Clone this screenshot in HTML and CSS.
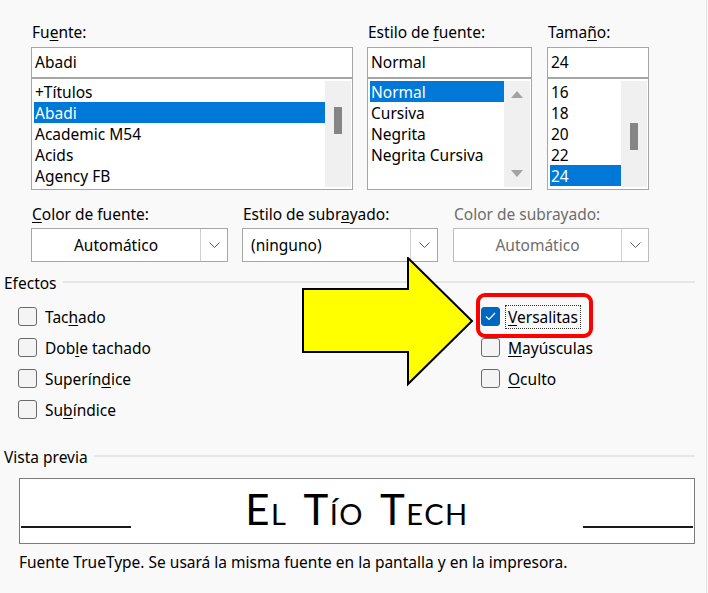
FILE: index.html
```html
<!DOCTYPE html>
<html lang="es">
<head>
    <meta charset="UTF-8">
    <meta name="viewport" content="width=device-width, initial-scale=1.0">
    <title>Fuente</title>
    <link rel="stylesheet" href="styles.css">
</head>
<body>
    <div class="dialog">
        <div class="font-row">
            <div class="field field-name">
                <div class="lbl">Fu<u>e</u>nte:</div>
                <div class="combo-input">Abadi</div>
                <div class="listbox">
                    <ul class="items">
                        <li>+Títulos</li>
                        <li class="sel">Abadi</li>
                        <li>Academic M54</li>
                        <li>Acids</li>
                        <li>Agency FB</li>
                    </ul>
                    <div class="scroll"><div class="thumb thumb-name"></div></div>
                </div>
            </div>

            <div class="field field-style">
                <div class="lbl">Estilo de <u>f</u>uente:</div>
                <div class="combo-input">Normal</div>
                <div class="listbox">
                    <ul class="items">
                        <li class="sel">Normal</li>
                        <li>Cursiva</li>
                        <li>Negrita</li>
                        <li>Negrita Cursiva</li>
                    </ul>
                    <div class="scroll scroll-arrows">
                        <svg width="12" height="8" viewBox="0 0 12 8"><path d="M0 8 L6 1 L12 8 Z" fill="#a3a3a3"/></svg>
                        <svg width="12" height="8" viewBox="0 0 12 8"><path d="M0 0 L6 7 L12 0 Z" fill="#a3a3a3"/></svg>
                    </div>
                </div>
            </div>

            <div class="field field-size">
                <div class="lbl">Tama<u>ñ</u>o:</div>
                <div class="combo-input">24</div>
                <div class="listbox">
                    <ul class="items">
                        <li>16</li>
                        <li>18</li>
                        <li>20</li>
                        <li>22</li>
                        <li class="sel">24</li>
                    </ul>
                    <div class="scroll"><div class="thumb thumb-size"></div></div>
                </div>
            </div>
        </div>

        <div class="select-row">
            <div class="field field-color">
                <div class="lbl"><u>C</u>olor de fuente:</div>
                <div class="select">
                    <span class="select-text center">Automático</span>
                    <span class="select-btn"><svg width="11" height="7" viewBox="0 0 11 7"><path d="M0.5 0.5 L5.5 5.5 L10.5 0.5" fill="none" stroke="#5a5a5a" stroke-width="1"/></svg></span>
                </div>
            </div>
            <div class="field field-underline">
                <div class="lbl">Estilo de subr<u>a</u>yado:</div>
                <div class="select">
                    <span class="select-text">(ninguno)</span>
                    <span class="select-btn"><svg width="11" height="7" viewBox="0 0 11 7"><path d="M0.5 0.5 L5.5 5.5 L10.5 0.5" fill="none" stroke="#5a5a5a" stroke-width="1"/></svg></span>
                </div>
            </div>
            <div class="field disabled">
                <div class="lbl">Color de subrayado:</div>
                <div class="select">
                    <span class="select-text center">Automático</span>
                    <span class="select-btn"><svg width="11" height="7" viewBox="0 0 11 7"><path d="M0.5 0.5 L5.5 5.5 L10.5 0.5" fill="none" stroke="#5a5a5a" stroke-width="1"/></svg></span>
                </div>
            </div>
        </div>

        <div class="section-head">
            <span>Efectos</span>
            <span class="rule"></span>
        </div>

        <div class="effects">
            <div class="col">
                <div class="check"><span class="box"></span><span class="txt">Tac<u>h</u>ado</span></div>
                <div class="check"><span class="box"></span><span class="txt">Dob<u>l</u>e tachado</span></div>
                <div class="check"><span class="box"></span><span class="txt">Superín<u>d</u>ice</span></div>
                <div class="check"><span class="box"></span><span class="txt">Su<u>b</u>índice</span></div>
            </div>
            <div class="col">
                <div class="check">
                    <span class="box checked"><svg width="11" height="9" viewBox="0 0 11 9"><path d="M1 4.5 L4 7.5 L10 1" fill="none" stroke="#fff" stroke-width="1.2"/></svg></span>
                    <span class="txt focus"><u>V</u>ersalitas</span>
                </div>
                <div class="check"><span class="box"></span><span class="txt"><u>M</u>ayúsculas</span></div>
                <div class="check"><span class="box"></span><span class="txt"><u>O</u>culto</span></div>
            </div>
        </div>

        <div class="section-head preview-head">
            <span>Vista previa</span>
            <span class="rule"></span>
        </div>

        <div class="preview">
            <span class="blank"></span>
            <span class="sample">El Tío Tech</span>
            <span class="blank"></span>
        </div>

        <p class="note">Fuente TrueType. Se usará la misma fuente en la pantalla y en la impresora.</p>

        <!-- annotations drawn on top of the screenshot -->
        <svg class="arrow" width="174" height="130" viewBox="0 0 174 130">
            <polygon points="1,32 106,32 106,1 170,64 106,127 106,95 1,95" fill="#ffff00" stroke="#000" stroke-width="2" stroke-linejoin="miter"/>
        </svg>
        <div class="highlight"></div>
    </div>
</body>
</html>
```

FILE: styles.css
```css
* {
    margin: 0;
    padding: 0;
    box-sizing: border-box;
}

body {
    font-family: 'Noto Sans', 'Open Sans', sans-serif;
    font-size: 15.5px;
    color: #000;
    background: #f9f9f9;
    width: 708px;
    height: 593px;
    overflow: hidden;
}

u {
    text-underline-offset: 2px;
}

.dialog {
    position: relative;
    width: 707px;
    height: 593px;
    border-right: 1px solid #e2e2e2;
    padding-top: 22px;
}

.lbl {
    height: 20px;
    line-height: 20px;
    padding-left: 1px;
    margin-bottom: 5px;
    white-space: nowrap;
}

/* Font / style / size lists */
.font-row {
    display: flex;
    padding-left: 31px;
    gap: 14px;
}

.field-name { width: 322px; }
.field-style { width: 165px; }
.field-size { width: 102px; margin-left: 1px; }

.combo-input {
    height: 31px;
    border: 1px solid #a6a6a6;
    background: #fff;
    line-height: 29px;
    padding-left: 3px;
}

.listbox {
    display: flex;
    height: 112px;
    border: 1px solid #a6a6a6;
    background: #fff;
    padding: 2px 1px 2px 2px;
}

.items {
    list-style: none;
    flex: 1;
}

.items li {
    height: 21px;
    line-height: 22px;
    padding-left: 1px;
    white-space: nowrap;
}

.items li.sel {
    background: #0078d7;
    color: #fff;
}

.scroll {
    width: 26px;
    background: #f0f0f0;
    display: flex;
    justify-content: center;
}

.thumb {
    width: 8px;
    height: 27px;
    background: #858585;
}

.thumb-name { margin-top: 26px; }
.thumb-size { margin-top: 42px; }

.scroll-arrows {
    flex-direction: column;
    align-items: center;
    justify-content: space-between;
    padding: 9px 0 9px;
}

/* Drop-down row */
.select-row {
    display: flex;
    padding-left: 31px;
    gap: 14px;
    margin-top: 14px;
}

.field-color { width: 197px; }
.field-underline { width: 196px; }
.select-row .disabled { width: 196px; margin-left: 1px; }

.select-row .lbl {
    margin-bottom: 4px;
}

.select {
    display: flex;
    height: 34px;
    border: 1px solid #a6a6a6;
    background: #fff;
}

.select-text {
    flex: 1;
    line-height: 32px;
    padding-left: 8px;
}

.select-text.center {
    text-align: center;
    padding-left: 0;
}

.select-btn {
    width: 27px;
    border-left: 1px solid #cfcfcf;
    display: flex;
    align-items: center;
    justify-content: center;
}

.disabled .lbl,
.disabled .select-text {
    color: #6d6d6d;
}

.disabled .select {
    border-color: #bdbdbd;
}

/* Group headings */
.section-head {
    display: flex;
    align-items: center;
    height: 20px;
    margin-top: 11px;
    padding-left: 4px;
    margin-right: 11px;
}

.section-head .rule {
    flex: 1;
    height: 2px;
    background: #e6e6e6;
    margin-left: 6px;
    margin-top: -3px;
}

/* Effect check boxes */
.effects {
    display: grid;
    grid-template-columns: 463px auto;
    padding-left: 18px;
    margin-top: 8px;
}

.check {
    display: flex;
    align-items: center;
    height: 31px;
}

.box {
    width: 19px;
    height: 19px;
    border: 1px solid #6a6a6a;
    border-radius: 3px;
    background: #f4f4f4;
    margin-right: 5px;
}

.box.checked {
    background: #0067c0;
    border-color: #0067c0;
    display: flex;
    align-items: center;
    justify-content: center;
}

.txt {
    padding: 1px 2px;
    border: 1px solid transparent;
    line-height: 20px;
}

.txt.focus {
    border: 1px dotted #333;
}

/* Preview */
.preview-head {
    margin-top: 22px;
}

.preview {
    display: flex;
    align-items: flex-end;
    justify-content: space-between;
    height: 66px;
    margin: 11px 11px 0 19px;
    border: 1px solid #7c7c7c;
    background: #fff;
    padding: 0 1px 15px 1px;
}

.blank {
    width: 110px;
    height: 2px;
    background: #1a1a1a;
}

.sample {
    font-family: 'Lato', 'Liberation Sans', sans-serif;
    font-variant: small-caps;
    font-size: 42px;
    letter-spacing: 1.5px;
    word-spacing: 5px;
    line-height: 1;
    margin-bottom: -2px;
}

.note {
    margin-top: 8px;
    padding-left: 19px;
    line-height: 20px;
}

/* Annotations */
.arrow {
    position: absolute;
    left: 302px;
    top: 257px;
}

.highlight {
    position: absolute;
    left: 476px;
    top: 293px;
    width: 117px;
    height: 45px;
    border: 4px solid #ff0000;
    border-radius: 9px;
}
```
